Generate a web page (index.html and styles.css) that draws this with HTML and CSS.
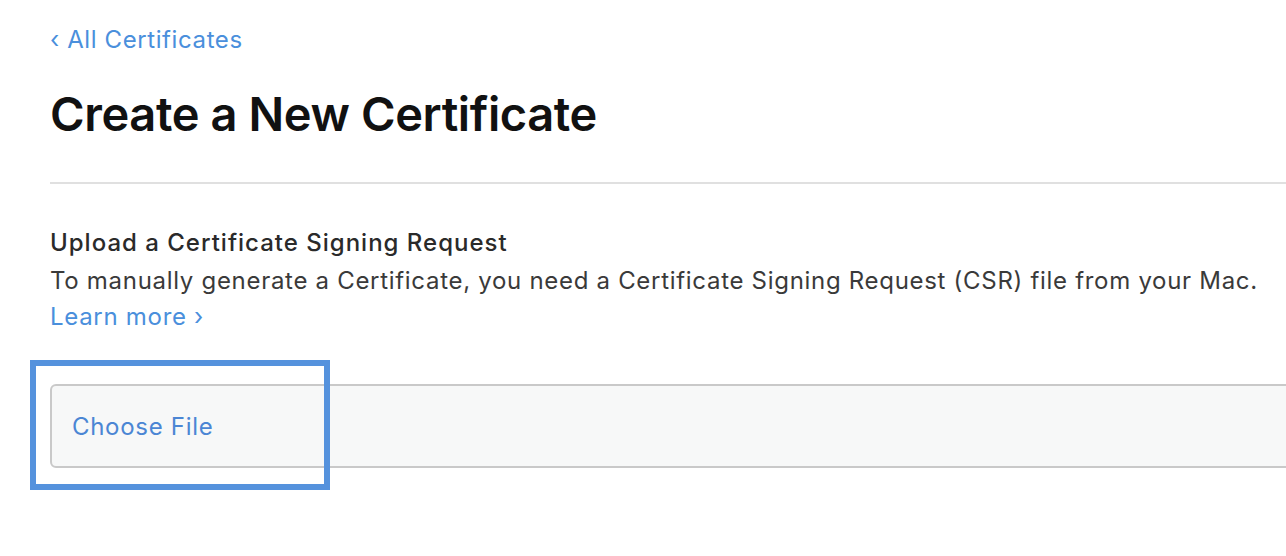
FILE: index.html
```html
<!DOCTYPE html>
<html lang="en">
<head>
<meta charset="utf-8">
<title>Create a New Certificate</title>
<link rel="stylesheet" href="styles.css">
</head>
<body>
<main class="page">
  <a class="back" href="#"><span class="chev">‹</span> All Certificates</a>
  <h1 class="title">Create a New Certificate</h1>
  <hr class="rule">
  <section class="upload">
    <h2 class="upload-title">Upload a Certificate Signing Request</h2>
    <p class="upload-desc">To manually generate a Certificate, you need a Certificate Signing Request (CSR) file from your Mac.</p>
    <a class="learn" href="#">Learn more ›</a>
    <div class="file-wrap">
      <div class="file-box"><span class="file-label">Choose File</span></div>
      <div class="highlight"></div>
    </div>
  </section>
</main>
</body>
</html>
```
FILE: styles.css
```css
html {
  overflow: hidden;
}
html, body {
  margin: 0;
  padding: 0;
  background: #ffffff;
}
body {
  font-family: Inter, "Liberation Sans", Arial, sans-serif;
  color: #333;
}
.page {
  padding: 26px 0 40px 50px;
}
.back {
  display: block;
  color: #4a8fdc;
  text-decoration: none;
  font-size: 24px;
  line-height: 28px;
  letter-spacing: 0.6px;
}
.title {
  margin: 35px 0 0;
  font-size: 47px;
  line-height: 50px;
  font-weight: 600;
  color: #111;
  letter-spacing: -0.4px;
}
.rule {
  margin: 43px 0 0;
  border: 0;
  height: 2px;
  background: #e0e0e0;
}
.upload {
  padding-top: 45px;
}
.upload-title {
  margin: 0;
  font-size: 24px;
  line-height: 28px;
  font-weight: 500;
  color: #2a2a2a;
  letter-spacing: 1px;
}
.upload-desc {
  margin: 10px 0 0;
  font-size: 24px;
  line-height: 28px;
  color: #3a3a3a;
  letter-spacing: 0.7px;
}
.learn {
  display: block;
  margin-top: 8px;
  font-size: 24px;
  line-height: 28px;
  color: #4a8fdc;
  text-decoration: none;
  letter-spacing: 0.7px;
}
.file-wrap {
  position: relative;
  margin-top: 53px;
}
.file-box {
  box-sizing: border-box;
  height: 84px;
  margin-right: -20px;
  border: 2px solid #c9c9c9;
  border-radius: 6px;
  background: #f7f8f8;
  display: flex;
  align-items: center;
  padding-left: 20px;
}
.file-label {
  font-size: 24px;
  color: #4b86d4;
  letter-spacing: 0.7px;
}
.highlight {
  position: absolute;
  left: -20px;
  top: -24px;
  width: 300px;
  height: 130px;
  box-sizing: border-box;
  border: 6px solid #5592dd;
}
```
